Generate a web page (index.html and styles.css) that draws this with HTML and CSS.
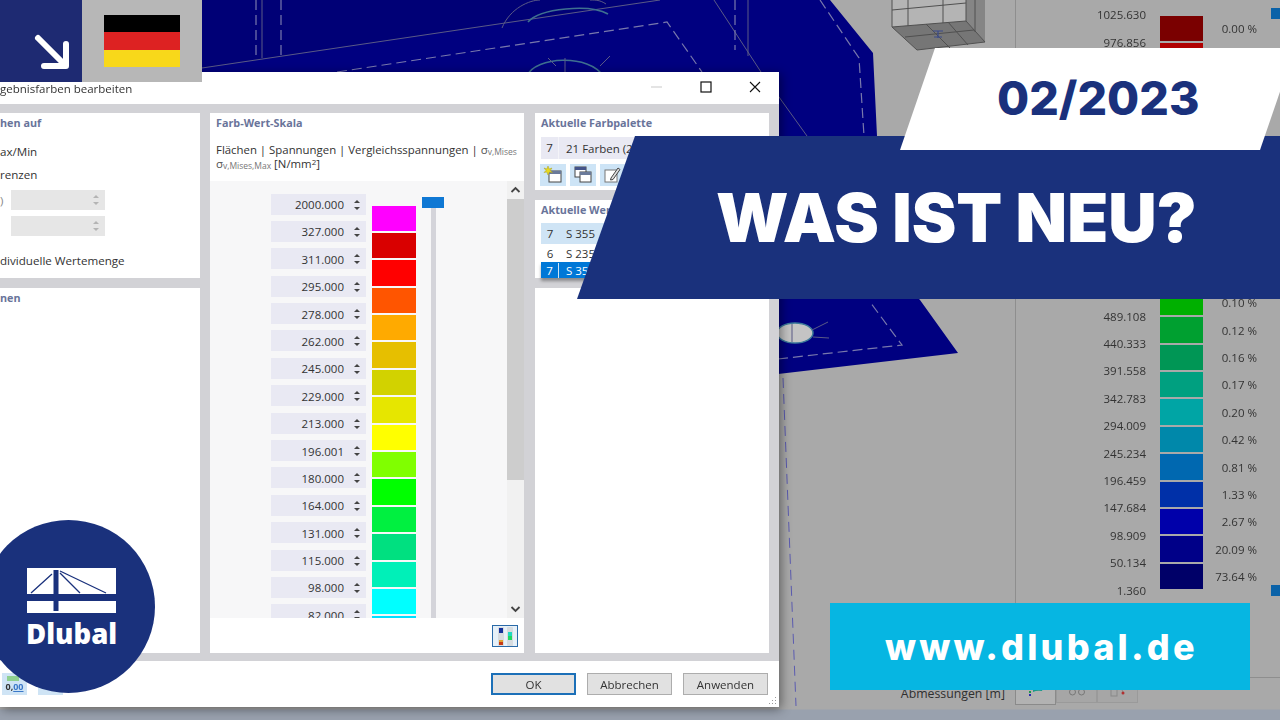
FILE: index.html
```html
<!DOCTYPE html>
<html lang="de">
<head>
<meta charset="utf-8">
<title>Was ist neu? 02/2023</title>
<link rel="stylesheet" href="styles.css">
</head>
<body>
<div class="stage">
  <svg class="model" viewBox="0 0 1280 720" aria-hidden="true">
    <polygon class="m-hi" points="0,0 830,0 873,53 877,136 881,260 920,300 958,353 778,374 0,400"/>
    <polygon class="m-lo" points="0,0 660,0 202,68 0,90"/>
    <line class="m-l" x1="202" y1="68" x2="660" y2="0"/>
    <polyline class="m-d" points="337,72 667,22 702,72"/>
    <polyline class="m-l" points="714,0 761,72 807,136"/>
    <polyline class="m-d" points="820,0 859,58 864,136"/>
    <line class="m-d" x1="256" y1="0" x2="256" y2="60"/>
    <line class="m-l" x1="262" y1="0" x2="262" y2="58"/>
    <line class="m-d" x1="281" y1="0" x2="281" y2="55"/>
    <line class="m-d" x1="735" y1="0" x2="735" y2="50"/>
    <line class="m-l" x1="748" y1="0" x2="748" y2="56"/>
    <path class="m-l" d="M502 28 C510 8 530 0 540 0 M606 4 C600 0 596 0 590 0"/>
    <path class="m-c" d="M528 22 C540 8 590 4 608 14"/>
    <path class="m-c" d="M527 76 C535 56 590 54 603 76"/>
    <line class="m-l" x1="565" y1="58" x2="565" y2="72"/>
    <line class="m-l" x1="548" y1="58" x2="556" y2="66"/>
    <line class="m-l" x1="600" y1="66" x2="610" y2="56"/>
    <ellipse class="m-hole" cx="795" cy="333" rx="18" ry="10"/>
    <line class="m-l" x1="792" y1="324" x2="792" y2="342"/>
    <line class="m-l" x1="812" y1="330" x2="828" y2="322"/>
    <line class="m-l" x1="813" y1="337" x2="829" y2="338"/>
    <polyline class="m-d" points="778,359 902,345 870,302"/>
    <line class="m-e" x1="783" y1="378" x2="796" y2="706"/>
    <polygon class="c-front" points="892,0 966,0 966,21 892,27"/>
    <polygon class="c-side" points="966,0 985,0 985,42 966,21"/>
    <polygon class="c-base" points="892,27 966,21 985,42 917,50"/>
    <path class="c-grid" d="M892 0 V27 M892 10 L966 3 M908 0 V26 M943 0 V23 M905 37 L974 30 M926 24 L950 48 M948 22 L968 45 M975 0 V32 M966 0 V21 M892 27 L966 21 L985 42 L917 50 Z"/>
    <path class="c-axis" d="M933 31 h10 M938 31 v7 M934 37 h8"/>
  </svg>

  <aside class="results">
    <div class="legend">
      <div class="labels">
        <span>1025.630</span><span>976.856</span><span></span><span></span><span></span><span></span><span></span><span></span><span></span><span></span><span></span>
        <span>489.108</span><span>440.333</span><span>391.558</span><span>342.783</span><span>294.009</span><span>245.234</span><span>196.459</span><span>147.684</span><span>98.909</span><span>50.134</span><span>1.360</span>
      </div>
      <div class="bars">
        <i class="r0"></i><i class="r1"></i><i class="r2"></i><i class="r3"></i><i class="r4"></i><i class="r5"></i><i class="r6"></i><i class="r7"></i><i class="r8"></i><i class="r9"></i>
        <i class="r10"></i><i class="r11"></i><i class="r12"></i><i class="r13"></i><i class="r14"></i><i class="r15"></i><i class="r16"></i><i class="r17"></i><i class="r18"></i><i class="r19"></i><i class="r20"></i>
      </div>
      <div class="pcts">
        <span>0.00 %</span><span></span><span></span><span></span><span></span><span></span><span></span><span></span><span></span><span></span>
        <span>0.10 %</span><span>0.12 %</span><span>0.16 %</span><span>0.17 %</span><span>0.20 %</span><span>0.42 %</span><span>0.81 %</span><span>1.33 %</span><span>2.67 %</span><span>20.09 %</span><span>73.64 %</span>
      </div>
    </div>
    <b class="knob knob-top"></b>
    <b class="knob knob-bottom"></b>
  </aside>

  <div class="tabs">
    <span class="tabs-label">Abmessungen [m]</span>
    <span class="tab tab-on">
      <svg width="16" height="12" viewBox="0 0 16 12"><rect x="1" y="2" width="2" height="2" fill="#0a3a9a"/><rect x="1" y="5" width="2" height="2" fill="#1a9a4a"/><rect x="1" y="8" width="2" height="2" fill="#2a2aaa"/><path d="M5 3 Q9 0 15 1 L14 5 Q9 4 5 6Z" fill="#1a9a8a"/><path d="M11 2 L15 1 L14 4Z" fill="#c8a030"/></svg>
    </span>
    <span class="tab">
      <svg width="18" height="10" viewBox="0 0 18 10"><circle cx="4.5" cy="6" r="3" fill="none" stroke="#777"/><circle cx="13.5" cy="6" r="3" fill="none" stroke="#777"/><path d="M4.500 3V1M13.500 3V1" stroke="#777"/></svg>
    </span>
    <span class="tab">
      <svg width="18" height="14" viewBox="0 0 18 14"><rect x="2" y="2" width="6" height="10" fill="none" stroke="#888"/><path d="M11 2 L14 8" stroke="#888"/><circle cx="14" cy="9" r="1.500" fill="#b03030"/></svg>
    </span>
  </div>

  <section class="dialog">
    <header class="titlebar">
      <span class="title">gebnisfarben bearbeiten</span>
      <div class="winctl">
        <svg width="12" height="12" viewBox="0 0 12 12"><line x1="0" y1="6" x2="11" y2="6" stroke="#c9c9c9"/></svg>
        <svg width="12" height="12" viewBox="0 0 12 12"><rect x="1" y="1" width="10" height="10" fill="none" stroke="#111" stroke-width="1.200"/></svg>
        <svg width="12" height="12" viewBox="0 0 12 12"><path d="M1 1 L11 11 M11 1 L1 11" stroke="#111" stroke-width="1.100"/></svg>
      </div>
    </header>

    <div class="body">
      <div class="col col-left">
        <div class="panel p-range">
          <h2 class="head">hen auf</h2>
          <p class="opt opt-a">ax/Min</p>
          <p class="opt opt-b">renzen</p>
          <div class="field"><span class="paren">)</span><span class="ro"><span class="spin spin-dim"></span></span></div>
          <div class="field"><span class="paren"></span><span class="ro"><span class="spin spin-dim"></span></span></div>
          <p class="opt opt-c">dividuelle Wertemenge</p>
        </div>
        <div class="panel p-fill">
          <h2 class="head">nen</h2>
        </div>
      </div>

      <div class="panel col-mid">
        <h2 class="head head-mid">Farb-Wert-Skala</h2>
        <p class="sub">Flächen | Spannungen | Vergleichsspannungen | <span class="sym">σ<sub>v,Mises</sub></span><br><span class="sym">σ<sub>v,Mises,Max</sub></span> [N/mm<sup>2</sup>]</p>
        <div class="scale">
          <div class="scale-main">
            <div class="values">
              <div class="val">2000.000<span class="spin"></span></div>
              <div class="val">327.000<span class="spin"></span></div>
              <div class="val">311.000<span class="spin"></span></div>
              <div class="val">295.000<span class="spin"></span></div>
              <div class="val">278.000<span class="spin"></span></div>
              <div class="val">262.000<span class="spin"></span></div>
              <div class="val">245.000<span class="spin"></span></div>
              <div class="val">229.000<span class="spin"></span></div>
              <div class="val">213.000<span class="spin"></span></div>
              <div class="val">196.001<span class="spin"></span></div>
              <div class="val">180.000<span class="spin"></span></div>
              <div class="val">164.000<span class="spin"></span></div>
              <div class="val">131.000<span class="spin"></span></div>
              <div class="val">115.000<span class="spin"></span></div>
              <div class="val">98.000<span class="spin"></span></div>
              <div class="val">82.000<span class="spin"></span></div>
            </div>
            <div class="swatches">
              <i class="s0"></i><i class="s1"></i><i class="s2"></i><i class="s3"></i><i class="s4"></i><i class="s5"></i><i class="s6"></i><i class="s7"></i><i class="s8"></i><i class="s9"></i><i class="s10"></i><i class="s11"></i><i class="s12"></i><i class="s13"></i><i class="s14"></i><i class="s15"></i>
            </div>
            <div class="slider"><b class="handle"></b><span class="track"></span></div>
          </div>
          <div class="scroll">
            <svg class="arrow" width="17" height="18" viewBox="0 0 17 18"><path d="M4.500 11 L8.500 7 L12.500 11" fill="none" stroke="#444" stroke-width="1.800"/></svg>
            <div class="thumb"></div>
            <div class="gap"></div>
            <svg class="arrow" width="17" height="18" viewBox="0 0 17 18"><path d="M4.500 7 L8.500 11 L12.500 7" fill="none" stroke="#444" stroke-width="1.800"/></svg>
          </div>
        </div>
        <div class="mid-foot">
          <span class="iconbtn">
            <svg width="24" height="19" viewBox="0 0 24 19"><rect x="5" y="0" width="6" height="19" rx="1" fill="#d6dbdf"/><rect x="14" y="0" width="6" height="19" rx="1" fill="#d6dbdf"/><rect x="6" y="1" width="4" height="5" fill="#12309a"/><rect x="6" y="13" width="4" height="2" fill="#e0a030"/><rect x="6" y="15" width="4" height="3" fill="#c83a14"/><rect x="15" y="5" width="4" height="4" fill="#20d8c0"/><rect x="15" y="9" width="4" height="4" fill="#20d860"/></svg>
          </span>
        </div>
      </div>

      <div class="col col-right">
        <div class="panel p-palette">
          <h2 class="head">Aktuelle Farbpalette</h2>
          <div class="combo"><span class="cell-n">7</span><span class="cell-t">21 Farben (2)</span></div>
          <div class="tools">
            <span class="tool">
              <svg width="20" height="18" viewBox="0 0 20 18"><rect x="6" y="5" width="12" height="11" fill="#fff" stroke="#444"/><rect x="6" y="5" width="12" height="3" fill="#6a7a9a"/><path d="M5 0 L6.200 3 L9 2 L7.300 4.500 L9.500 6.500 L6.500 6 L5 9 L3.800 6 L1 6.500 L3 4.500 L1 2 L3.800 3Z" fill="#e8d820" stroke="#a8a020" stroke-width=".5"/></svg>
            </span>
            <span class="tool">
              <svg width="20" height="18" viewBox="0 0 20 18"><rect x="2" y="1" width="11" height="10" fill="#fff" stroke="#444"/><rect x="2" y="1" width="11" height="3" fill="#44548a"/><rect x="7" y="6" width="11" height="10" fill="#fff" stroke="#444"/><rect x="7" y="6" width="11" height="3" fill="#6a7a9a"/></svg>
            </span>
            <span class="tool">
              <svg width="20" height="18" viewBox="0 0 20 18"><rect x="2" y="4" width="12" height="12" fill="#fff" stroke="#777"/><path d="M8 12 L15 2 L17 3.500 L10 13.500 L7.500 14Z" fill="#ddd" stroke="#444"/></svg>
            </span>
          </div>
        </div>
        <div class="panel p-values">
          <h2 class="head">Aktuelle Wertemenge</h2>
          <div class="vrow vrow-head"><span class="cell-n">7</span><span class="cell-t">S 355</span></div>
          <div class="vrow"><span class="cell-n">6</span><span class="cell-t">S 235</span></div>
          <div class="vrow vrow-sel"><span class="cell-n">7</span><span class="cell-t">S 355</span></div>
        </div>
        <div class="panel p-fill"></div>
      </div>
    </div>

    <footer class="foot">
      <div class="foot-icons">
        <span class="fbtn"><span class="zero"><span class="zero-a">0,</span><span class="zero-b">00</span></span></span>
        <span class="fbtn"></span>
      </div>
      <div class="actions">
        <button class="btn btn-main">OK</button>
        <button class="btn">Abbrechen</button>
        <button class="btn">Anwenden</button>
      </div>
      <svg class="grip" width="9" height="9" viewBox="0 0 9 9"><path d="M7 1h1v1H7zM4 4h1v1H4zM7 4h1v1H7zM1 7h1v1H1zM4 7h1v1H4zM7 7h1v1H7z" fill="#9a9a9a"/></svg>
    </footer>
  </section>

  <div class="corner">
    <div class="corner-arrow">
      <svg width="82" height="82" viewBox="0 0 82 82"><path d="M38 38 L65 65 M66 44 V66 H44" fill="none" stroke="#fff" stroke-width="6" stroke-linecap="round" stroke-linejoin="round"/></svg>
    </div>
    <div class="corner-flag">
      <div class="flag"><i class="f-b"></i><i class="f-r"></i><i class="f-y"></i></div>
    </div>
  </div>

  <div class="banner"><h1>WAS IST NEU?</h1></div>
  <div class="tag-date"><span>02/2023</span></div>
  <div class="url">www.dlubal.de</div>

  <div class="logo">
    <svg width="89" height="45" viewBox="0 0 89 45">
      <rect x="0" y="0" width="89" height="26" fill="#fff"/>
      <rect x="0" y="33" width="89" height="12" fill="#fff"/>
      <rect x="26.500" y="2" width="5" height="41" fill="#1a317c"/>
      <path d="M25 6 L4 25 M33 5 L53 25 M33 3 L79 25" stroke="#1a317c" stroke-width="1.300" fill="none"/>
    </svg>
    <span class="logo-name">Dlubal</span>
  </div>
</div>
</body>
</html>
```

FILE: styles.css
```css
* { box-sizing: border-box; }
html, body { margin: 0; padding: 0; }
body { width: 1280px; height: 720px; overflow: hidden; font-family: "Open Sans", "Noto Sans", sans-serif; }

.stage {
  position: relative;
  width: 1280px;
  height: 720px;
  overflow: hidden;
  background: linear-gradient(#a9a9a9 0, #a9a9a9 709px, #99a1ae 710px, #99a1ae 720px);
}

/* 3D model behind the dialog */
.model { position: absolute; left: 0; top: 0; width: 1280px; height: 720px; filter: blur(.4px); }
.m-hi { fill: #000080; }
.m-lo { fill: #000076; }
.m-l { fill: none; stroke: #5a5a86; stroke-width: 1; }
.m-d { fill: none; stroke: #7878ac; stroke-width: 1.200; stroke-dasharray: 10 5; }
.m-c { fill: none; stroke: #3f7090; stroke-width: 1.600; }
.m-e { stroke: #5b5bb0; stroke-width: 1; stroke-dasharray: 10 6; }
.m-hole { fill: #c4c4c4; stroke: #3c7a9a; stroke-width: 1.500; }
.c-front { fill: #b4b4b4; }
.c-side { fill: #858585; }
.c-base { fill: #767676; }
.c-grid { fill: none; stroke: #505050; stroke-width: 1; }
.c-axis { fill: none; stroke: #3a4a8a; stroke-width: 1.200; }

/* results legend */
.results {
  position: absolute;
  left: 1015px;
  top: 0;
  width: 265px;
  height: 678px;
  border-left: 1px solid #8e8e8e;
  border-bottom: 1px solid #8e8e8e;
  filter: blur(.3px);
}
.legend { display: flex; font-size: 11.500px; color: #333; }
.labels { display: flex; flex-direction: column; width: 130px; padding-top: 1.300px; text-align: right; }
.labels span, .pcts span { display: block; height: 27.400px; line-height: 27.400px; }
.bars { display: flex; flex-direction: column; width: 43px; margin-left: 14px; padding-top: 16px; }
.bars i { display: block; height: 25.400px; margin-bottom: 2px; }
.pcts { display: flex; flex-direction: column; width: 54px; padding-top: 15.300px; text-align: right; }
.r0 { background: #7a0000; } .r1 { background: #b00000; } .r2 { background: #c80000; } .r3 { background: #c83c00; }
.r4 { background: #c87800; } .r5 { background: #c8a000; } .r6 { background: #a8a800; } .r7 { background: #80a800; }
.r8 { background: #50a800; } .r9 { background: #20a800; } .r10 { background: #00b000; } .r11 { background: #00a030; }
.r12 { background: #009655; } .r13 { background: #00a080; } .r14 { background: #00a5a5; } .r15 { background: #0088aa; }
.r16 { background: #0068b0; } .r17 { background: #0030a8; } .r18 { background: #0000aa; } .r19 { background: #000088; } .r20 { background: #000068; }
.knob { position: absolute; left: 255px; width: 10px; height: 11px; background: #0a62a8; }
.knob-top { top: 8px; }
.knob-bottom { top: 585px; }

.tabs {
  position: absolute;
  right: 142px;
  top: 679px;
  display: flex;
  align-items: flex-start;
  font-size: 12.300px;
  color: #2f2f2f;
}
.tabs-label { position: absolute; right: 133px; top: 6px; white-space: nowrap; }
.tab { display: flex; align-items: center; justify-content: center; width: 41px; height: 24px; border: 1px solid #9a9a9a; border-top: 0; background: #a6a6a6; }
.tab-on { background: #b2b2b2; height: 26px; border-color: #8a8a8a; }

/* dialog */
.dialog {
  position: absolute;
  left: 0;
  top: 72px;
  width: 779px;
  height: 635px;
  display: flex;
  flex-direction: column;
  background: #fff;
  box-shadow: 2px 2px 10px rgba(0, 0, 0, .45);
  color: #333;
  font-size: 11.500px;
  filter: blur(.3px);
}
.titlebar { display: flex; align-items: center; justify-content: space-between; height: 32px; padding: 0 18px 0 0; flex: none; }
.title { font-size: 11.500px; color: #333; margin-top: 1px; }
.winctl { display: flex; gap: 37px; align-items: center; margin-top: -2px; }
.body { flex: 1; min-height: 0; display: flex; gap: 10px; padding: 9px 10px 8px 0; background: #d2d2d6; }
.col { display: flex; flex-direction: column; gap: 10px; }
.col-left { width: 200px; }
.col-right { width: 234px; margin-left: 1px; }
.panel { background: #fff; }
.p-fill { flex: 1; }
.head { margin: 0; padding-top: 3px; font-size: 10.800px; line-height: 14px; font-weight: 700; color: #69749a; }

.p-range { height: 165px; }
.opt { margin: 0; line-height: 16px; color: #333; font-size: 11.600px; }
.opt-a { margin-top: 14px; }
.opt-b { margin-top: 7px; }
.opt-c { margin-top: 17px; }
.field { display: flex; height: 20px; margin-bottom: 6px; align-items: center; }
.opt-b + .field { margin-top: 7px; }
.paren { width: 11px; color: #888; }
.ro { display: flex; justify-content: flex-end; align-items: center; width: 94px; height: 20px; padding-right: 5px; background: #e6e6e6; }

.spin { display: flex; flex-direction: column; justify-content: space-between; width: 7px; height: 10px; }
.spin::before, .spin::after { content: ""; width: 0; height: 0; border-left: 3px solid transparent; border-right: 3px solid transparent; }
.spin::before { border-bottom: 3px solid #444; }
.spin::after { border-top: 3px solid #444; }
.spin-dim::before { border-bottom-color: #b4b4b4; }
.spin-dim::after { border-top-color: #b4b4b4; }

.col-mid { width: 314px; display: flex; flex-direction: column; }
.head-mid { padding-left: 6px; }
.sub { margin: 13px 0 0; padding-left: 6px; height: 38px; line-height: 14px; font-size: 11.400px; color: #333; white-space: nowrap; }
.sym { color: #555; }
.sym sub { font-size: 8.500px; line-height: 0; vertical-align: -1px; color: #777; }
.sub sup { font-size: 8px; line-height: 0; vertical-align: 3px; }
.scale { display: flex; height: 437px; background: #f7f7f8; flex: none; }
.scale-main { flex: 1; display: flex; align-items: flex-start; height: 437px; overflow: hidden; padding: 12.500px 0 0 61px; }
.values { width: 95px; flex: none; }
.val { display: flex; justify-content: flex-end; align-items: center; gap: 10px; height: 21px; margin-bottom: 6.400px; padding: 1px 5px 0 0; background: #e9e9f3; font-size: 11.500px; color: #333; }
.swatches { width: 44px; flex: none; margin-left: 6px; padding-top: 12px; }
.swatches i { display: block; height: 25.400px; margin-bottom: 2px; }
.s0 { background: #ff00ff; } .s1 { background: #d90000; } .s2 { background: #ff0000; } .s3 { background: #ff5500; }
.s4 { background: #ffaa00; } .s5 { background: #e6bf00; } .s6 { background: #d2d200; } .s7 { background: #e6e600; }
.s8 { background: #ffff00; } .s9 { background: #80ff00; } .s10 { background: #00ff00; } .s11 { background: #00f040; }
.s12 { background: #00e080; } .s13 { background: #00f0b8; } .s14 { background: #00ffff; } .s15 { background: #00e0ff; }
.slider { width: 22px; margin-left: 6px; margin-top: 3.500px; height: 421px; display: flex; flex-direction: column; align-items: center; flex: none; }
.handle { display: block; width: 22px; height: 11px; background: #0f78d4; flex: none; }
.track { flex: 1; width: 5px; background: #d4d4da; }
.scroll { width: 17px; display: flex; flex-direction: column; background: #f1f1f1; flex: none; }
.arrow { flex: none; display: block; }
.thumb { height: 281px; background: #cdcdcd; flex: none; }
.gap { flex: 1; }
.mid-foot { flex: 1; display: flex; justify-content: flex-end; padding: 7px 6px 0 0; }
.iconbtn { display: flex; align-items: center; justify-content: center; width: 26px; height: 22px; background: #e6f0f8; border: 1.500px solid #2a6aa8; }

.p-palette { height: 77px; padding: 0 6px; }
.p-palette .head { margin-bottom: 7px; }
.combo { display: flex; align-items: center; height: 22px; background: #e9e9f3; color: #333; }
.cell-n { width: 18px; text-align: center; flex: none; }
.cell-t { padding-left: 7px; white-space: nowrap; }
.combo .cell-n { border-right: 1px solid #f4f4f8; height: 22px; line-height: 22px; }
.tools { display: flex; gap: 4px; margin-top: 5px; margin-left: -1px; }
.tool { display: flex; align-items: center; justify-content: center; width: 26px; height: 22px; background: #cde4f6; }

.p-values { height: 78px; margin-top: 0; padding: 0 6px; }
.p-values .head { margin-bottom: 6px; }
.vrow { display: flex; align-items: center; height: 18px; color: #333; }
.vrow-head { height: 21px; background: #cfe4f5; }
.vrow-sel { height: 16px; background: #0078d7; color: #fff; box-shadow: 0 3px 3px rgba(0, 0, 0, .35); }
.vrow-sel .cell-n { border-right: 1px solid #cfe4f5; }

.foot { position: relative; flex: none; height: 46px; display: flex; justify-content: space-between; align-items: flex-start; padding: 12px 11px 0 2px; }
.foot-icons { display: flex; gap: 11px; }
.fbtn { display: block; width: 25px; height: 22px; background: #cfe4f5; }
.zero {
  display: block;
  padding-top: 8px;
  font-size: 9px;
  line-height: 11px;
  font-weight: 700;
  text-align: center;
  background: linear-gradient(#8fd08f, #8fd08f) 5px 3px / 12px 5px no-repeat;
}
.zero-a { color: #333; }
.zero-b { color: #3a78c8; text-decoration: underline; }
.actions { display: flex; gap: 11px; align-items: flex-start; }
.btn { width: 85px; height: 22px; padding: 0; font: 11.500px "Open Sans", "Noto Sans", sans-serif; color: #333; background: #e1e1e1; border: 1px solid #adadad; }
.btn-main { border: 2px solid #1c70b8; }
.grip { position: absolute; right: 2px; bottom: 2px; }

/* overlays */
.corner { position: absolute; left: 0; top: 0; display: flex; height: 82px; }
.corner-arrow { width: 82px; height: 82px; background: #1e2a72; }
.corner-flag { width: 120px; height: 82px; background: #b7b7b7; padding: 15px 0 0 22px; }
.flag { display: flex; flex-direction: column; width: 76px; height: 52px; }
.flag i { display: block; flex: 1; }
.f-b { background: #000; }
.f-r { background: #dd2222; }
.f-y { background: #f8d81a; }

.tag-date {
  position: absolute;
  left: 900px;
  top: 48px;
  width: 395px;
  height: 102px;
  display: flex;
  align-items: center;
  background: #fff;
  clip-path: polygon(35px 0, 100% 0, 360px 100%, 0 100%);
}
.tag-date span { margin: -1px 0 0 97px; font-family: Inter, "Open Sans", sans-serif; font-weight: 800; font-size: 46.500px; line-height: 1; color: #1a317c; }

.banner {
  position: absolute;
  left: 577px;
  top: 136px;
  width: 703px;
  height: 163px;
  display: flex;
  align-items: center;
  background: #1a317c;
  clip-path: polygon(58px 0, 100% 0, 100% 100%, 0 100%);
}
.banner h1 { margin: 0 0 0 139px; font-family: Inter, "Open Sans", sans-serif; font-weight: 900; font-size: 67px; line-height: 1; color: #fff; white-space: nowrap; }

.url {
  position: absolute;
  left: 830px;
  top: 603px;
  width: 420px;
  height: 87px;
  padding-left: 55px;
  line-height: 88px;
  background: #06b6e2;
  color: #fff;
  font-family: Inter, "Open Sans", sans-serif;
  font-weight: 800;
  font-size: 36px;
  letter-spacing: 3.200px;
  white-space: nowrap;
}

.logo {
  position: absolute;
  left: -18px;
  top: 520px;
  width: 173px;
  height: 173px;
  border-radius: 50%;
  background: #1a317c;
  display: flex;
  flex-direction: column;
  align-items: flex-start;
  padding: 48px 0 0 45px;
}
.logo svg { display: block; flex: none; }
.logo-name { margin: 4px 0 0 -1px; font-family: "Open Sans", sans-serif; font-weight: 800; font-size: 27.500px; line-height: 34px; color: #fff; }
```
